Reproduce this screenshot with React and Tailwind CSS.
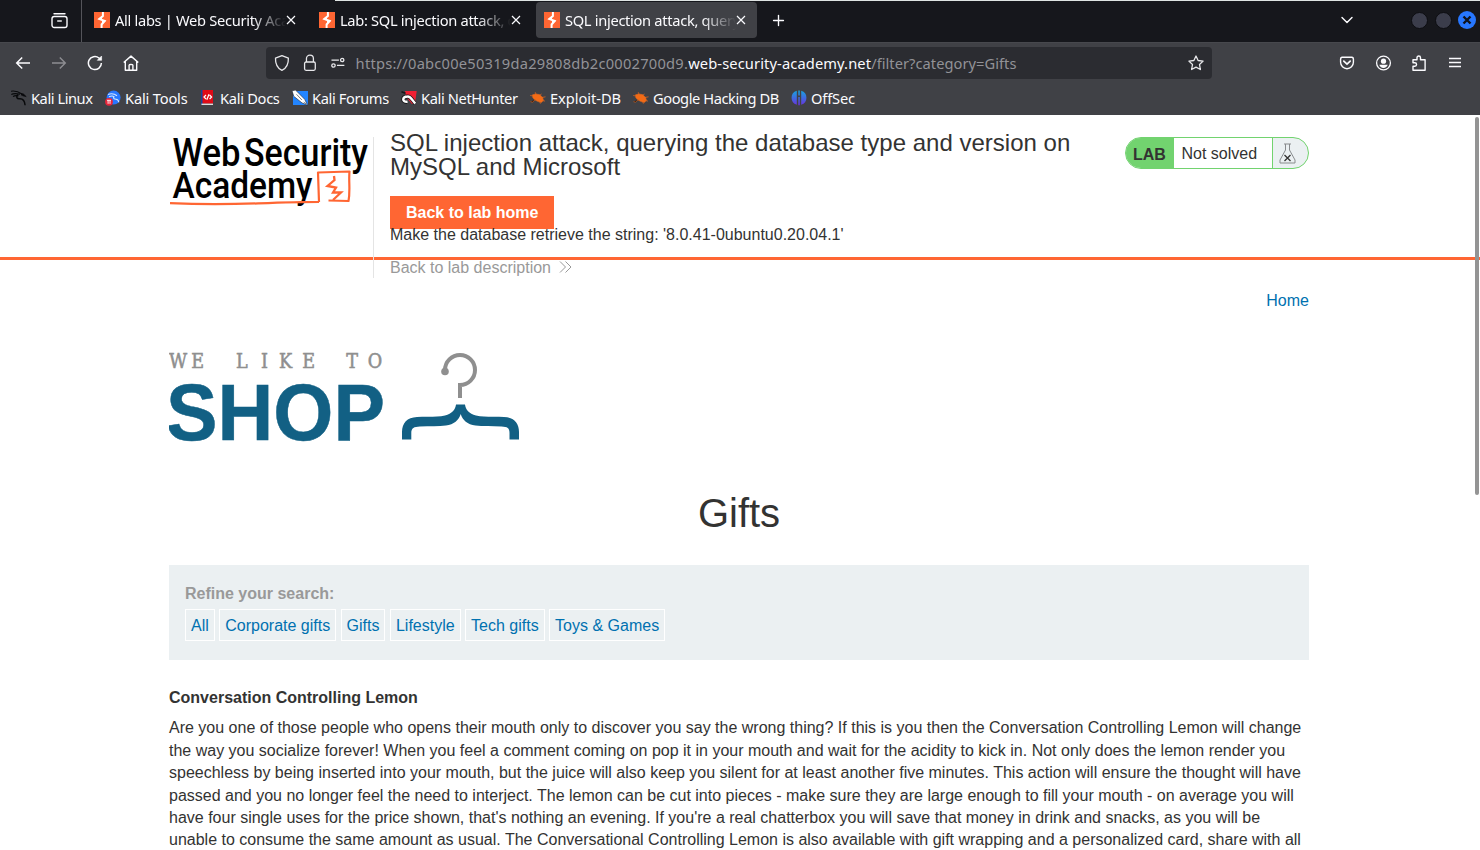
import React from "react";
import { ChevronDown, Plus } from "lucide-react";

const UI = "font-['Noto_Sans',sans-serif]";

function BurpIcon() {
  return (
    <svg width="16" height="16" viewBox="0 0 16 16" className="shrink-0">
      <rect width="16" height="16" fill="#ff6633" />
      <path d="M8.900 0v4L5.300 7l5.400 2-3.100 3.500V16" fill="none" stroke="#fff" strokeWidth="2" />
      <path d="M4 7.200 8 4v3.600zM12.200 8.700 8 12.200V8.600z" fill="#fff" />
    </svg>
  );
}

function Close() {
  return (
    <svg width="10" height="10" viewBox="0 0 10 10" className="shrink-0">
      <path d="m1 1 8 8m0-8-8 8" stroke="#fbfbfe" strokeWidth="1.2" />
    </svg>
  );
}

function Tab({ title, active }) {
  return (
    <div className={"flex h-9 w-[221px] items-center rounded pl-2 " + (active ? "bg-[#404146]" : "")}>
      <BurpIcon />
      <div className="ml-[5px] w-[170.5px] overflow-hidden whitespace-nowrap text-[14.67px] tracking-[-0.31px] text-[#fbfbfe] [mask-image:linear-gradient(to_right,black_80%,transparent)]">
        {title}
      </div>
      <Close />
    </div>
  );
}

function KaliLinux() {
  return (
    <svg width="16" height="16" viewBox="0 0 16 16" fill="none" stroke="#08090b">
      <path d="M0 1.200c4-.8 8 .8 11.300 3M.3 4.500C3 3 6 3.600 9 4.200M2 6.500c2-1.200 3.800-1 5.400-.6" strokeWidth="1.100" />
      <path d="M7 4.500C4.500 7 6 8.900 8.500 8.700c4-.3 5.200 2 5.600 6.600" strokeWidth="1.500" />
      <path d="m10 3.500 2.500.5 2.700 2.600-2.600-.5-2.400-1" fill="#08090b" strokeWidth=".6" />
    </svg>
  );
}
function KaliTools() {
  return (
    <svg width="16" height="16" viewBox="0 0 16 16">
      <circle cx="8.600" cy="7.600" r="7" fill="#2777ff" />
      <path d="M3 4.500c4-1.600 7-.3 9 1.300M4 6.800c2-1 4-1 5-.2-1.200 2 .3 2.600 2 2.700 2 .2 2.600 1.500 2.800 3" fill="none" stroke="#d5e7ff" strokeWidth="1.100" />
      <circle cx="4" cy="11.800" r="3.900" fill="#e6253a" />
      <path d="M2 10.300h4M3.100 10.300v3.500M5 10.300v3.500" stroke="#fff" strokeWidth=".9" />
    </svg>
  );
}
function KaliDocs() {
  return (
    <svg width="14" height="16" viewBox="0 0 14 16">
      <path d="M1 0h2v15H1z" fill="#16439c" />
      <path d="M2.500 0H13v13.600H2.500z" fill="#e00b17" />
      <path d="M1.500 13.600H13V15H1.500z" fill="#ddd" />
      <path d="m6 5-2 2 2 2m3.600-4 2 2-2 2M9 4.200 6.800 9.800" stroke="#fff" fill="none" strokeWidth="1.200" />
    </svg>
  );
}
function KaliForums() {
  return (
    <svg width="16" height="16" viewBox="0 0 16 16">
      <path d="M1 1h15v14H1z" fill="#2385ff" />
      <path d="M0 .8 3.500 0l9.200 9.300 2.900 6-5.600-2.400L1.800 6.300z" fill="#fff" stroke="#16202f" strokeWidth=".6" />
      <path d="m4.500 4.300 5.400 5.700M11.700 12.100l2.300 1.700" stroke="#1f2733" strokeWidth=".6" />
    </svg>
  );
}
function NetHunter() {
  return (
    <svg width="16" height="16" viewBox="0 0 16 16">
      <path d="M4 1h11.700l-1.800 13L11 14 5 7z" fill="#ef1f32" />
      <path d="M6 12C1 12.500.5 6.500 6.500 6.500c3.500 0 4.500 3 7.500 7" fill="none" stroke="#17171a" strokeWidth="3.800" />
      <path d="M6.500 11.800C1 12.500.8 6.700 6.500 6.500c3.300-.2 4.500 3.500 7.700 7" fill="none" stroke="#fff" strokeWidth="2.500" />
      <path d="m.5 1.700 4 1.500" stroke="#17171a" strokeWidth="1.600" />
    </svg>
  );
}
function Bug() {
  return (
    <svg width="16" height="16" viewBox="0 0 16 16" stroke="#e9681b">
      <path d="M2.500 4.800 5.500 3.900l4 .7 3 2.600 1 3-2 2.200-3.500-.8L5 10 2.800 7.700z" fill="#f36b16" strokeWidth=".5" />
      <path d="m6 4-.8-1.800M10 5l1.600-1M12 7.500l3.500-.7M12 10.500l3 .6M9.500 11l.9 2.700M5.500 9.500 2.500 12l-2-.3M3 6 .2 5.500" strokeWidth=".7" />
    </svg>
  );
}
function OffSec() {
  return (
    <svg width="16" height="16" viewBox="0 0 16 16">
      <defs>
        <linearGradient id="offsec" x2="0" y2="1">
          <stop stopColor="#15a5df" />
          <stop offset="1" stopColor="#6932df" />
        </linearGradient>
      </defs>
      <path d="M5.800.8v14A7.300 7.300 0 0 1 5.800.8M10.200.8v14a7.300 7.300 0 0 0 0-14M7.300.4h1.500v5.100H7.300zM7.300 7h1.500v8.300H7.300z" fill="url(#offsec)" />
    </svg>
  );
}

const bookmarks = [
  ["Kali Linux", KaliLinux, "w-[94px] tracking-[-0.45px]", "ml-1"],
  ["Kali Tools", KaliTools, "w-[95px] tracking-[-0.18px]", "ml-1"],
  ["Kali Docs", KaliDocs, "w-[92px] tracking-[-0.3px]", "ml-[6px]"],
  ["Kali Forums", KaliForums, "w-[109px] tracking-[-0.38px]", "ml-1"],
  ["Kali NetHunter", NetHunter, "w-[129px] tracking-[-0.38px]", "ml-1"],
  ["Exploit-DB", Bug, "w-[103px] tracking-[-0.06px]", "ml-1"],
  ["Google Hacking DB", Bug, "w-[158px] tracking-[-0.43px]", "ml-1"],
  ["OffSec", OffSec, "w-[80px] tracking-[-0.15px]", "ml-1"],
];

function Browser() {
  return (
    <div className={UI + " bg-[#404146] text-[#fbfbfe]"}>
      <div className="flex h-[42px] items-center bg-[#16171c]">
        <div className="flex h-full w-[82px] items-center justify-end border-r border-[#54545a] pr-[13px] pb-[1px]">
          <svg width="17" height="17" viewBox="0 0 17 17" fill="none" stroke="#fbfbfe" strokeWidth="1.400">
            <path d="M3 1.700h11" strokeLinecap="round" />
            <rect x="1" y="4.500" width="15" height="11" rx="2.200" />
            <path d="M6.200 9h4.600" />
          </svg>
        </div>
        <div className="flex h-full flex-1 flex-col">
          <div className="ml-[253px] h-px bg-[#dfe4e3]" />
          <div className="flex flex-1 items-center pb-[3px] pl-1">
            <Tab title="All labs | Web Security Academy" />
            <div className="ml-1"><Tab title="Lab: SQL injection attack, querying" /></div>
            <div className="ml-1"><Tab active title="SQL injection attack, querying" /></div>
            <Plus className="ml-[13px]" size={17} strokeWidth={1.9} />
            <ChevronDown className="ml-[550px]" size={20} strokeWidth={1.7} />
            <div className="ml-[54px] flex items-center gap-[7px]">
              <div className="size-[17px] rounded-full border border-[#0c0d11] bg-[#3b3d4b]" />
              <div className="size-[17px] rounded-full border border-[#0c0d11] bg-[#3b3d4b]" />
              <svg className="-ml-px" width="18" height="18" viewBox="0 0 18 18">
                <circle cx="9" cy="9" r="9" fill="#2777ff" />
                <path d="m5.500 5.500 7 7m0-7-7 7" stroke="#10131c" strokeWidth="2.400" />
              </svg>
            </div>
          </div>
        </div>
      </div>

      <div className="flex h-[41px] items-center border-t border-[#47484d]">
        <div className="ml-[15px] flex items-center gap-5">
          <svg width="16" height="16" viewBox="0 0 16 16" fill="none" stroke="#fbfbfe" strokeWidth="1.500"><path d="M15 8H2M7.200 2.500 1.700 8l5.500 5.500" /></svg>
          <svg width="16" height="16" viewBox="0 0 16 16" fill="none" stroke="#8d8d92" strokeWidth="1.400"><path d="M1 8h13M8.800 2.500 14.300 8l-5.500 5.500" /></svg>
          <svg width="16" height="16" viewBox="0 0 16 16" fill="none" stroke="#fbfbfe" strokeWidth="1.500"><path d="M14.400 8A6.500 6.500 0 1 1 12 3l1.500 1.500" /><path d="M14.600 1v4.300h-4.300z" fill="#fbfbfe" strokeWidth=".6" /></svg>
          <svg className="-ml-[0.5px]" width="16" height="16" viewBox="0 0 16 16" fill="none" stroke="#fbfbfe" strokeWidth="1.400" strokeLinejoin="round"><path d="m.7 7.500 7.300-6.400 7.300 6.400M2.300 6.500v8.800h11.400V6.500M6.100 15v-4.700c0-1 3.800-1 3.800 0V15" /></svg>
        </div>
        <div className="ml-[127.5px] flex h-8 w-[946px] items-center rounded bg-[#2b2c31] px-2 text-[#fbfbfe]">
          <svg width="16" height="18" viewBox="0 0 16 18" fill="none" stroke="#e7e7ea" strokeWidth="1.300"><path d="M8 1.500 14.500 4c.2 5.500-1.200 10-6.500 12.500C2.700 14 1.300 9.500 1.500 4z" strokeLinejoin="round" /></svg>
          <svg className="ml-3" width="16" height="18" viewBox="0 0 16 18" fill="none" stroke="#e7e7ea" strokeWidth="1.300"><rect x="2.600" y="8" width="10.800" height="8.400" rx="1.500" /><path d="M4.500 8V4.500a3.500 3.500 0 0 1 7 0V8" /></svg>
          <svg className="ml-3" width="16" height="16" viewBox="0 0 16 16" fill="none" stroke="#e7e7ea" strokeWidth="1.300"><path d="M1.500 5h7.500M7 10.500h7.500" /><circle cx="12.300" cy="5" r="1.700" /><circle cx="3.500" cy="10.500" r="1.700" /></svg>
          <div className="ml-[10px] w-[840px] whitespace-nowrap text-[14.67px] text-[#929297]">
            <span className="tracking-[0.24px]">https://0abc00e50319da29808db2c0002700d9.</span><span className="tracking-[0.12px] text-[#fbfbfe]">web-security-academy.net</span><span className="tracking-[0.04px]">/filter?category=Gifts</span>
          </div>
          <svg width="16" height="16" viewBox="0 0 16 16" className="shrink-0" fill="none" stroke="#e7e7ea" strokeWidth="1.300"><path d="m8 1 2.100 4.500 5 .6-3.600 3.400.9 5L8 12.100l-4.400 2.400.9-5L.9 6.100l5-.6z" strokeLinejoin="round" /></svg>
        </div>
        <div className="ml-[127px] flex items-center gap-5">
          <svg width="16" height="16" viewBox="0 0 16 16" fill="none" stroke="#fbfbfe" strokeWidth="1.400"><path d="M3 2.200h10A1.800 1.800 0 0 1 14.400 4v3.300a6.400 6.400 0 0 1-12.800 0V4A1.800 1.800 0 0 1 3 2.200z" /><path d="m4.800 6.200 3.200 3 3.200-3" strokeWidth="1.700" strokeLinecap="round" /></svg>
          <svg width="17" height="16" viewBox="0 0 16 16"><circle cx="8" cy="8" r="6.900" fill="none" stroke="#fbfbfe" strokeWidth="1.300" /><circle cx="8" cy="6.200" r="2.600" fill="#fbfbfe" /><path d="M3.800 9.800h8.400c-.5 2-2.100 3.100-4.200 3.100s-3.700-1.100-4.200-3.100" fill="#fbfbfe" /></svg>
          <svg className="-ml-px" width="16" height="16" viewBox="0 0 16 16" fill="none" stroke="#fbfbfe" strokeWidth="1.400" strokeLinejoin="round"><path d="M2 15.200v-4h1.800a1.700 1.700 0 0 0 0-3.500H2V4.800h4V2.700a1.700 1.700 0 0 1 3.500 0v2.100h4.600v10.400z" /></svg>
          <svg width="16" height="16" viewBox="0 0 16 16" stroke="#fbfbfe" strokeWidth="1.300"><path d="M2 3.500h12M2 7.500h12M2 11.500h12" /></svg>
        </div>
      </div>

      <div className="flex h-8 items-center pb-[2px] pl-[11px]">
        {bookmarks.map(([name, Icon, width, gap]) => (
          <div key={name} className={"flex shrink-0 items-center whitespace-nowrap text-[14.67px] " + width}>
            <Icon />
            <span className={gap}>{name}</span>
          </div>
        ))}
      </div>
    </div>
  );
}

function AcademyLogo() {
  return (
    <svg width="204" height="76" viewBox="0 0 204 76" className="shrink-0 font-['Roboto',sans-serif] font-medium">
      <text x="3.500" y="28.500" fontSize="38.500" textLength="68" lengthAdjust="spacingAndGlyphs">Web</text>
      <text x="75" y="28.500" fontSize="38.500" textLength="124" lengthAdjust="spacingAndGlyphs">Security</text>
      <text x="3.500" y="60.500" fontSize="37" textLength="140" lengthAdjust="spacingAndGlyphs">Academy</text>
      <path d="M1 66.200c28 1.300 66 1 88 .2s42-1.500 61-1.500M150 65l-1-29.500 31.500-1c-1 9 1 19-1 29.500l-20-.5" fill="none" stroke="#ff6633" strokeWidth="2.200" strokeLinejoin="round" />
      <path d="m165 39 .5 4-7 6 8.500 1.500-3 5h8l-8 7.500" fill="none" stroke="#ff6633" strokeWidth="2.300" />
    </svg>
  );
}

function ShopLogo() {
  return (
    <svg width="352" height="94" viewBox="0 0 352 94">
      <g className="font-['DejaVu_Serif',serif]" fill="#8f8f8f" stroke="#8f8f8f" strokeWidth=".6" fontSize="20.500" transform="scale(.86 1)">
        <text x="0 26 78 107 128 155 206 231" y="17.500">WELIKETO</text>
      </g>
      <text x="-3" y="89.500" fontSize="80.500" textLength="219" lengthAdjust="spacingAndGlyphs" className="font-['Liberation_Sans',sans-serif] font-bold" fill="#126084" stroke="#126084" strokeWidth=".5">SHOP</text>
      <path d="M276 20a15 15 0 1 1 15 15v13" fill="none" stroke="#8f8f8f" strokeWidth="4" />
      <circle cx="276" cy="21.500" r="3.800" fill="#8f8f8f" />
      <path d="M233 89.500V82c0-9 5-14.500 15-15 10-.6 20 .5 28-1.500 7-1.800 10.500-6 11-11h9c.5 5 4 9.200 11 11 8 2 18 .9 28 1.500 10 .5 15 6 15 15v7.500h-9.500V83c0-5-2-6.300-8-6.500-10-.4-19-.2-26-1-8-.9-13-5.500-14.800-11.500-1.800 6-6.800 10.600-14.800 11.500-7 .8-16 .6-26 1-6 .2-8.600 1.500-8.600 6.500v6.500z" fill="#126084" />
    </svg>
  );
}

const filters = ["All", "Corporate gifts", "Gifts", "Lifestyle", "Tech gifts", "Toys & Games"];

const description = [
  "Are you one of those people who opens their mouth only to discover you say the wrong thing? If this is you then the Conversation Controlling Lemon will change",
  "the way you socialize forever! When you feel a comment coming on pop it in your mouth and wait for the acidity to kick in. Not only does the lemon render you",
  "speechless by being inserted into your mouth, but the juice will also keep you silent for at least another five minutes. This action will ensure the thought will have",
  "passed and you no longer feel the need to interject. The lemon can be cut into pieces - make sure they are large enough to fill your mouth - on average you will",
  "have four single uses for the price shown, that's nothing an evening. If you're a real chatterbox you will save that money in drink and snacks, as you will be",
  "unable to consume the same amount as usual. The Conversational Controlling Lemon is also available with gift wrapping and a personalized card, share with all",
];

export default function App() {
  return (
    <div className="flex h-[850px] w-[1480px] flex-col overflow-hidden bg-white">
      <Browser />
      <div className="relative h-[735px] overflow-hidden pl-[169px] font-['Liberation_Sans',Arial,sans-serif] text-base text-[#333332]">
        <div className="-ml-[169px] h-[145px] border-b-[3px] border-[#ff6633] pl-[169px]">
          <div className="flex w-[1140px] items-start pt-[22px]">
            <AcademyLogo />
            <div className="h-[141px] w-[735px] shrink-0 border-l border-[#e4e4e4] pl-4">
              <h2 className="-mt-[6px] whitespace-nowrap text-2xl leading-6 tracking-[0.012px]">
                SQL injection attack, querying the database type and version on<br />MySQL and Microsoft
              </h2>
              <div className="mt-[17px] flex h-[33px] w-[164px] items-center bg-[#ff6633] pl-4 font-bold text-white">Back to lab home</div>
              <p className="-mt-[2px] leading-4">Make the database retrieve the string: '8.0.41-0ubuntu0.20.04.1'</p>
              <div className="mt-[17px] flex items-center leading-4 text-[#999]">
                Back to lab description
                <svg className="mb-[2px] ml-2" width="14" height="14" viewBox="0 0 14 14" fill="none" stroke="#999"><path d="m1 1.500 5.500 5.500L1 12.500M6.500 1.500 12 7l-5.500 5.500" /></svg>
              </div>
            </div>
            <div className="ml-[17px] flex h-8 w-[184px] shrink-0 overflow-hidden rounded-full border border-[#72d36f] bg-[#ebf0f2]">
              <div className="w-12 bg-[#72d36f] pl-[7px] leading-[33px] font-bold">LAB</div>
              <div className="w-[99px] border-r border-[#72d36f] bg-white pl-[7.5px] leading-[31px]">Not solved</div>
              <svg className="mt-[5px] ml-[5.5px]" width="17" height="21" viewBox="0 0 17 21" fill="none">
                <path d="M5 1h7M6.500 1v6L1 17v3h15v-3L10.500 7V1" stroke="#888b8d" />
                <path d="m5.500 12 6 6m0-6-6 6" stroke="#333332" strokeWidth="1.300" />
              </svg>
            </div>
          </div>
        </div>

        <div className="flex w-[1140px] flex-col">
          <a className="mt-[30px] self-end leading-[22px] text-[#0071b0]">Home</a>
          <div className="mt-[38px] h-[94px]"><ShopLogo /></div>
          <h1 className="mt-[44px] text-center text-[40px] leading-[50px]">Gifts</h1>
          <section className="mt-[27px] h-[95px] bg-[#ebf0f2] px-4 pt-[18px]">
            <div className="leading-[22px] font-bold text-[#999]">Refine your search:</div>
            <div className="mt-1 flex gap-[4.45px]">
              {filters.map((f) => (
                <a key={f} className="h-8 border border-white px-[5px] leading-[31px] text-[#0071b0]">{f}</a>
              ))}
            </div>
          </section>
          <h3 className="mt-[27px] leading-[22px] font-bold">Conversation Controlling Lemon</h3>
          <p className="mt-[8.3px] whitespace-nowrap leading-[22.4px]">
            {description.map((line) => <span key={line} className="block">{line}</span>)}
          </p>
        </div>
        <div className="absolute top-[2px] right-px h-[378px] w-1 rounded-full bg-[#949494]" />
      </div>
    </div>
  );
}
